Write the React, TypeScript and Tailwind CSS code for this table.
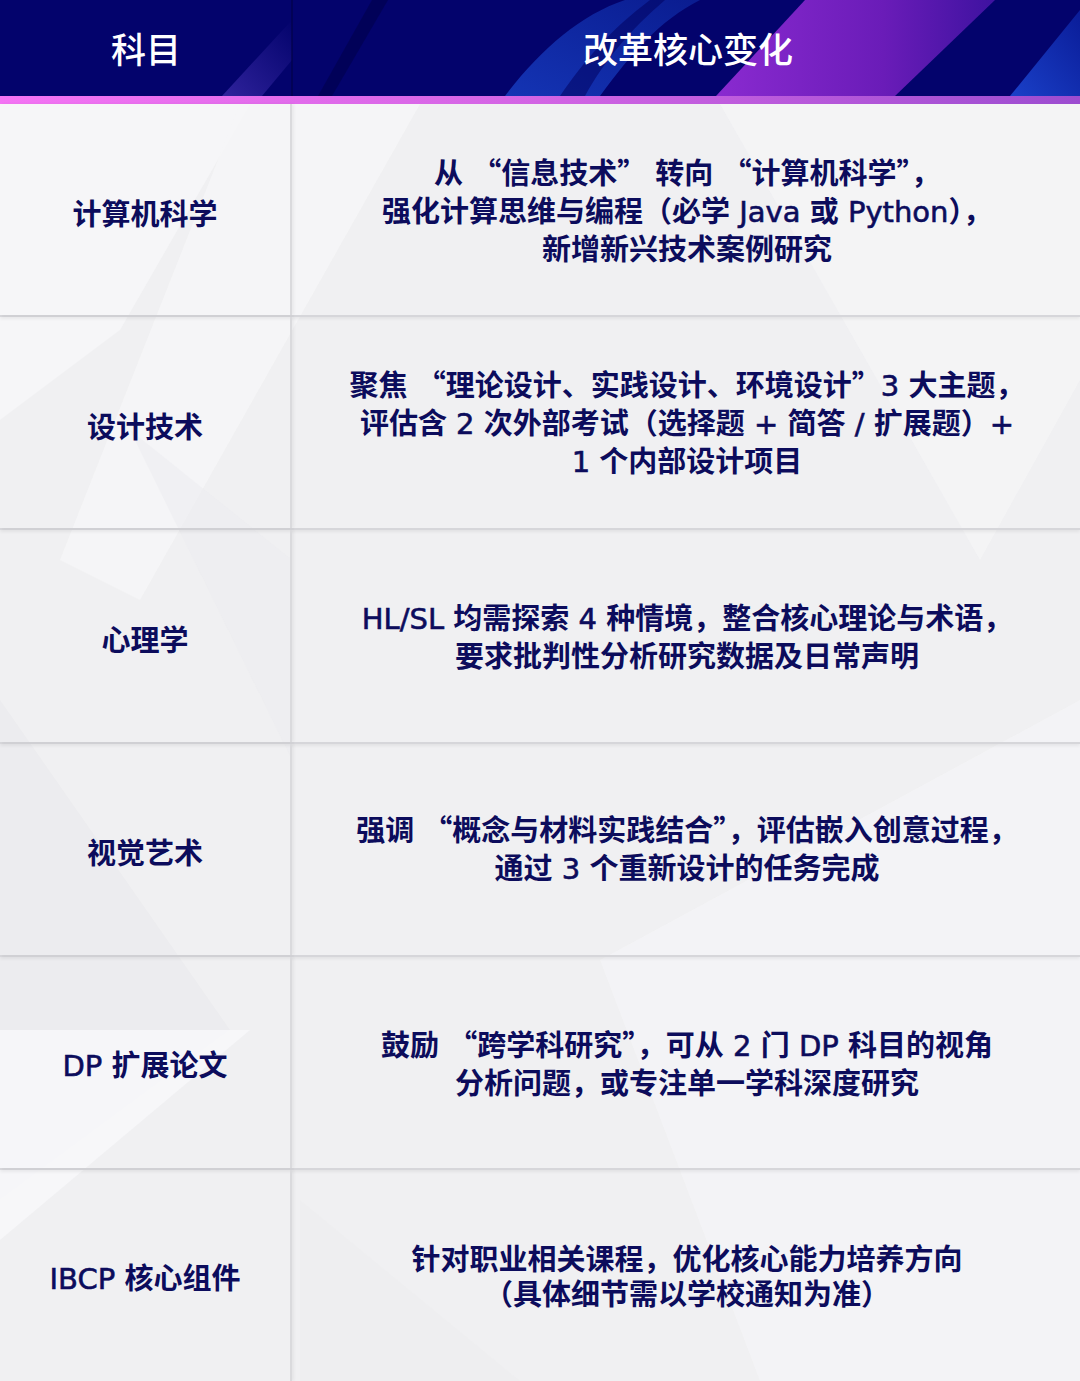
import React from "react";

const rows: { subject: string; lines: string[] }[] = [
  {
    subject: "计算机科学",
    lines: [
      "从 “信息技术” 转向 “计算机科学”，",
      "强化计算思维与编程（必学 Java 或 Python），",
      "新增新兴技术案例研究",
    ],
  },
  {
    subject: "设计技术",
    lines: [
      "聚焦 “理论设计、实践设计、环境设计”3 大主题，",
      "评估含 2 次外部考试（选择题 + 简答 / 扩展题）+",
      "1 个内部设计项目",
    ],
  },
  {
    subject: "心理学",
    lines: [
      "HL/SL 均需探索 4 种情境，整合核心理论与术语，",
      "要求批判性分析研究数据及日常声明",
    ],
  },
  {
    subject: "视觉艺术",
    lines: [
      "强调 “概念与材料实践结合”，评估嵌入创意过程，",
      "通过 3 个重新设计的任务完成",
    ],
  },
  {
    subject: "DP 扩展论文",
    lines: [
      "鼓励 “跨学科研究”，可从 2 门 DP 科目的视角",
      "分析问题，或专注单一学科深度研究",
    ],
  },
  {
    subject: "IBCP 核心组件",
    lines: ["针对职业相关课程，优化核心能力培养方向", "（具体细节需以学校通知为准）"],
  },
];

function Mixed({ text }: { text: string }) {
  const parts = text.split(/([A-Za-z0-9/+ ]+)/);
  return (
    <>
      {parts.map((p, i) =>
        /^[A-Za-z0-9/+ ]+$/.test(p) ? (
          <span
            key={i}
            className="font-normal [-webkit-text-stroke:0.6px_#0c0c5c]"
            style={{ fontFamily: '"DejaVu Sans", "Noto Sans", sans-serif' }}
          >
            {p}
          </span>
        ) : (
          <span key={i}>{p}</span>
        )
      )}
    </>
  );
}

export default function App() {
  return (
    <div
      className="relative w-[1080px] h-[1381px] overflow-hidden bg-[#f0f0f2] flex flex-col"
      style={{ fontFamily: '"Noto Sans CJK SC", "Noto Sans", sans-serif' }}
    >
      {/* faint background facets */}
      <svg className="absolute inset-0 pointer-events-none" width="1080" height="1381" viewBox="0 0 1080 1381">
        <polygon points="0,104 250,104 120,330 0,420" fill="#f6f6f8" />
        <polygon points="240,104 420,104 140,600 60,560" fill="#f6f6f8" opacity="0.8" />
        <polygon points="0,700 230,1030 0,1200" fill="#e9e9ec" opacity="0.6" />
        <polygon points="0,1030 250,1030 0,1240" fill="#f7f7f9" opacity="0.9" />
        <polygon points="720,104 1080,104 1080,380 980,560" fill="#f5f5f7" opacity="0.7" />
        <polygon points="600,960 1080,700 1080,1381 760,1381" fill="#f4f4f6" opacity="0.8" />
        <polygon points="300,1200 520,1381 300,1381" fill="#ececef" opacity="0.6" />
        <polygon points="130,430 292,560 292,760" fill="#ececef" opacity="0.5" />
      </svg>

      {/* header */}
      <div className="relative h-[96px] grid grid-cols-[292px_1fr] bg-[#03036c] overflow-hidden">
        <svg className="absolute inset-0" width="1080" height="96" viewBox="0 0 1080 96">
          <defs>
            <linearGradient id="pg" x1="0" y1="0" x2="1" y2="0">
              <stop offset="0" stopColor="#8a2ad0" />
              <stop offset="0.6" stopColor="#6a1cb8" />
              <stop offset="1" stopColor="#3e12a0" />
            </linearGradient>
            <linearGradient id="bg1" x1="0" y1="1" x2="1" y2="0">
              <stop offset="0" stopColor="#1434b4" />
              <stop offset="1" stopColor="#0a1c90" />
            </linearGradient>
            <linearGradient id="lg" x1="0" y1="1" x2="1" y2="0">
              <stop offset="0" stopColor="#3a2aa8" />
              <stop offset="1" stopColor="#03036c" />
            </linearGradient>
            <linearGradient id="rg" x1="0" y1="1" x2="1" y2="0">
              <stop offset="0" stopColor="#1a40c8" />
              <stop offset="1" stopColor="#0a1c98" />
            </linearGradient>
          </defs>
          <polygon points="222,96 292,20 292,60 262,96" fill="url(#lg)" opacity="0.8" />
          <polygon points="318,96 372,0 388,0 332,96" fill="#010150" opacity="0.7" />
          <path d="M505,96 C540,50 580,15 625,0 L700,0 C660,20 630,55 600,96 Z" fill="url(#bg1)" />
          <path d="M560,96 C585,60 610,30 650,0 L665,0 C630,30 605,60 585,96 Z" fill="#020260" opacity="0.55" />
          <polygon points="716,96 805,0 995,0 895,96" fill="url(#pg)" />
          <polygon points="1010,96 1080,10 1080,96" fill="url(#rg)" />
        </svg>
        <div className="relative flex items-center justify-center text-white text-[35px] font-medium">
          科目
        </div>
        <div className="relative flex items-center justify-center text-white text-[35px] font-medium pl-[4px]">
          改革核心变化
        </div>
        <div className="absolute left-[291px] top-0 h-full w-[2px] bg-[#010148] opacity-60" />
      </div>

      <div className="relative h-[8px] bg-gradient-to-r from-[#f474f4] via-[#d264e4] to-[#9c4cd0]" />

      {/* body */}
      <div className="relative flex-1 flex flex-col">
        {rows.map((r, i) => (
          <div
            key={i}
            className={`flex-1 grid grid-cols-[292px_1fr] ${i < rows.length - 1 ? "border-b-2 border-[#d6d6da] shadow-[0_2px_3px_rgba(0,0,0,0.06)]" : ""}`}
          >
            <div className="flex items-center justify-center border-r-2 border-[#dadadd] shadow-[2px_0_3px_rgba(0,0,0,0.05)] text-[#0c0c5c] text-[29px] leading-[36px] font-bold pt-[4px] whitespace-pre">
              <div>
                <Mixed text={r.subject} />
              </div>
            </div>
            <div className="flex flex-col items-center justify-center text-[#0c0c5c] text-[29px] leading-[35px] font-bold text-center pl-[2px]">
              {r.lines.map((l, j) => (
                <div key={j} className="whitespace-pre">
                  <Mixed text={l} />
                </div>
              ))}
            </div>
          </div>
        ))}
      </div>
    </div>
  );
}
